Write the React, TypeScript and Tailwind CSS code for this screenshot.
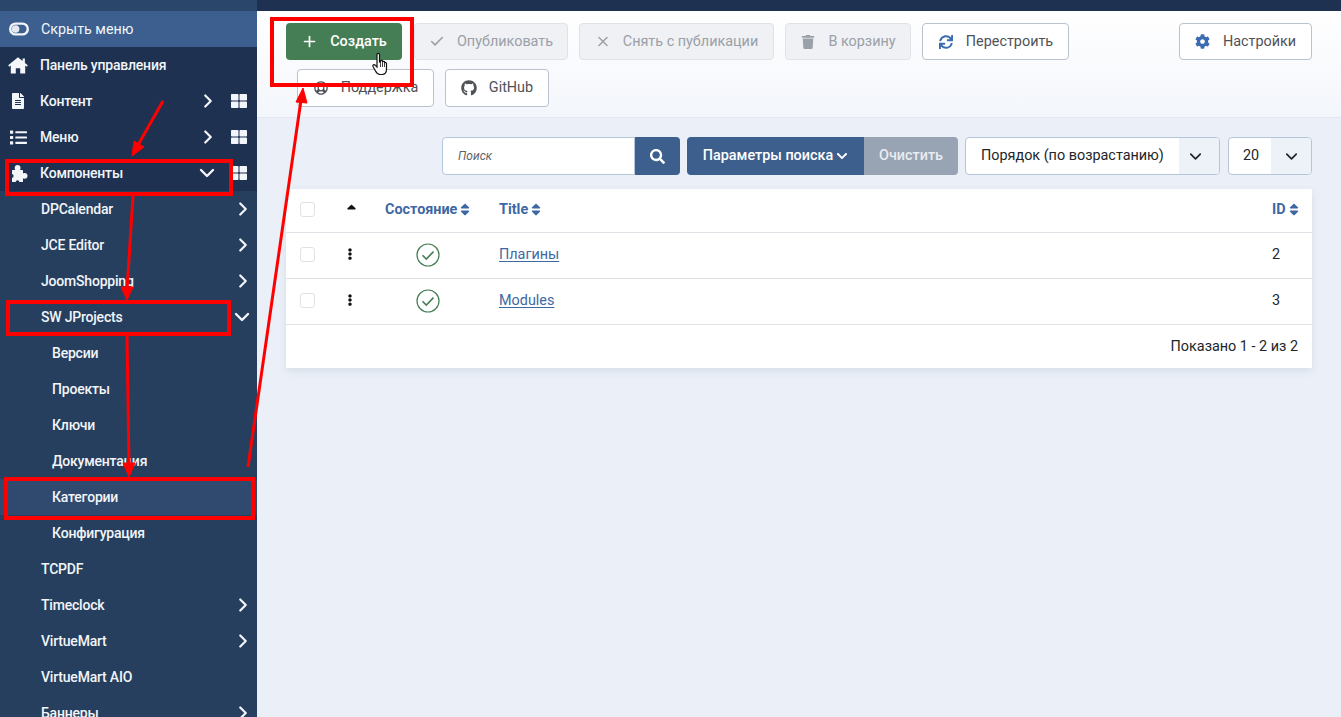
import React from "react";
import {
  FaFileAlt, FaList, FaThLarge, FaTrash, FaSync, FaCog,
  FaGithub, FaRegLifeRing, FaSearch, FaSort, FaEllipsisV, FaSortUp, FaChevronDown,
} from "react-icons/fa";
import { FiCheck, FiChevronDown, FiChevronRight, FiPlus, FiX } from "react-icons/fi";

const Toggle = () => (
  <svg width="20" height="14" viewBox="0 0 20 14" className="shrink-0">
    <rect x="1.2" y="1.6" width="17.6" height="10.8" rx="5.4" fill="none" stroke="#f2f5f9" strokeWidth="2.4" />
    <circle cx="6.6" cy="7" r="3.8" fill="#e4e9f0" />
  </svg>
);

const HomeIcon = () => (
  <svg width="20" height="17" viewBox="0 0 20 17" fill="#f4f6f9">
    <path d="M10 0.2 L14.6 4 V1.4 H16.9 V5.9 L19.8 8.3 L18.7 9.8 L17.2 8.6 V16.4 H12.2 V11.2 H7.8 V16.4 H2.8 V8.6 L1.3 9.8 L0.2 8.3 Z" />
  </svg>
);

const PuzzleIcon = () => (
  <svg width="18" height="17" viewBox="0 0 18 17" fill="#f4f6f9" className="ml-[1px]">
    <rect x="2" y="5" width="11" height="12" rx="0.5" />
    <circle cx="7.6" cy="3" r="2.9" />
    <circle cx="14.6" cy="10.8" r="2.9" />
    <circle cx="1.6" cy="11" r="2" fill="#1f3150" />
    <circle cx="7.5" cy="17" r="1.8" fill="#1f3150" />
  </svg>
);

type Row = { t: string; icon?: React.ReactNode; chev?: "r" | "d"; dash?: boolean; lvl: 1 | 2 | 3; active?: boolean };

const rows: Row[] = [
  { t: "Панель управления", icon: <HomeIcon />, lvl: 1 },
  { t: "Контент", icon: <FaFileAlt size={16} />, lvl: 1, chev: "r", dash: true },
  { t: "Меню", icon: <FaList size={17} />, lvl: 1, chev: "r", dash: true },
  { t: "Компоненты", icon: <PuzzleIcon />, lvl: 1, chev: "d", dash: true },
  { t: "DPCalendar", lvl: 2, chev: "r" },
  { t: "JCE Editor", lvl: 2, chev: "r" },
  { t: "JoomShopping", lvl: 2, chev: "r" },
  { t: "SW JProjects", lvl: 2, chev: "d" },
  { t: "Версии", lvl: 3 },
  { t: "Проекты", lvl: 3 },
  { t: "Ключи", lvl: 3 },
  { t: "Документация", lvl: 3 },
  { t: "Категории", lvl: 3, active: true },
  { t: "Конфигурация", lvl: 3 },
  { t: "TCPDF", lvl: 2 },
  { t: "Timeclock", lvl: 2, chev: "r" },
  { t: "VirtueMart", lvl: 2, chev: "r" },
  { t: "VirtueMart AIO", lvl: 2 },
  { t: "Баннеры", lvl: 2, chev: "r" },
];

function SideRow({ r }: { r: Row }) {
  if (r.lvl === 1) {
    return (
      <div className="flex h-[36px] shrink-0 items-center bg-[#1f3150] pl-[8px] pr-[10px]">
        <span className="flex w-[20px] justify-center">{r.icon}</span>
        <span className="ml-[12px] flex-1">{r.t}</span>
        {r.chev === "r" && <FiChevronRight size={22} strokeWidth={2.4} className="mr-[12px]" />}
        {r.chev === "d" && <FiChevronDown size={24} strokeWidth={2.4} className="mr-[12px]" />}
        {r.dash && <FaThLarge size={16} />}
      </div>
    );
  }
  return (
    <div
      className={
        r.lvl === 2
          ? "flex h-[36px] shrink-0 items-center bg-[#263f5e] pl-[41px] pr-[3px]"
          : r.active
            ? "flex h-[36px] shrink-0 items-center bg-[#30496f] pl-[52px] pr-[3px]"
            : "flex h-[36px] shrink-0 items-center bg-[#263f5e] pl-[52px] pr-[3px]"
      }
    >
      <span className="flex-1">{r.t}</span>
      {r.chev === "r" && <FiChevronRight size={22} strokeWidth={2.4} />}
      {r.chev === "d" && <FiChevronDown size={24} strokeWidth={2.4} />}
    </div>
  );
}

function TBtn({ icon, label, w, off, cls }: { icon: React.ReactNode; label: string; w: string; off?: boolean; cls?: string }) {
  return (
    <div
      className={`flex h-[37px] items-center justify-center rounded-[4px] border text-[14.4px] ${w} ${
        off ? "border-[#dfe3e8] bg-[#eff1f4] text-[#9aa0a7]" : "border-[#b9c2cd] bg-white text-[#4f5257]"
      } ${cls ?? ""}`}
    >
      <span className="mr-[12px] flex w-[16px] justify-center">{icon}</span>
      {label}
    </div>
  );
}

function StatusIcon() {
  return (
    <svg width="24" height="24" viewBox="0 0 24 24">
      <circle cx="12" cy="12" r="11" fill="none" stroke="#457d54" strokeWidth="1.2" />
      <path d="M6.5 12.3 L10.3 16 L17.5 8.6" fill="none" stroke="#457d54" strokeWidth="1.6" />
    </svg>
  );
}

function Head({ t }: { t: string }) {
  return (
    <span className="inline-flex items-center text-[14.4px] font-bold text-[#3e68a3]">
      {t}
      <FaSort className="ml-[3px] h-[15px] w-[10px]" />
    </span>
  );
}

function TableRow({ title, id }: { title: string; id: string }) {
  return (
    <div className="flex h-[46px] items-center border-t border-[#dfe2e6] pb-[2px]">
      <div className="w-[45px] pl-[14px]">
        <div className="h-[15px] w-[15px] rounded-[3px] border border-[#dfe2e6] bg-white" />
      </div>
      <div className="mb-[2px] flex w-[38px] justify-center">
        <FaEllipsisV size={12} className="text-[#111]" />
      </div>
      <div className="ml-[2px] flex w-[114px] justify-center">
        <StatusIcon />
      </div>
      <div className="flex-1 pl-[14px] text-[14.4px] text-[#3e68a3] underline underline-offset-2">{title}</div>
      <div className="w-[40px] text-[14.4px] text-[#22262a]">{id}</div>
    </div>
  );
}

function Annotations() {
  const rect = "pointer-events-none absolute border-[4px] border-[#ff0000]";
  return (
    <>
      <div className={`${rect} left-[5px] top-[159px] h-[37px] w-[228px]`} />
      <div className={`${rect} left-[6px] top-[300px] h-[36px] w-[225px]`} />
      <div className={`${rect} left-[4px] top-[477px] h-[43px] w-[251px]`} />
      <div className={`${rect} left-[270px] top-[17px] h-[70px] w-[144px]`} />
      <svg width="1341" height="717" className="pointer-events-none absolute left-0 top-0">
        <g stroke="#ff0000" strokeWidth="3" fill="#ff0000">
          <line x1="163" y1="101" x2="138" y2="145" />
          <polygon points="132,156 134,141 144,147" strokeWidth="1" />
          <line x1="133" y1="196" x2="127" y2="290" />
          <polygon points="127,300 121,287 133,287" strokeWidth="1" />
          <line x1="127" y1="335" x2="129" y2="466" />
          <polygon points="129,477 123,463 135,463" strokeWidth="1" />
          <line x1="248" y1="467" x2="301" y2="100" />
          <polygon points="303,88 307,103 296,102" strokeWidth="1" />
        </g>
      </svg>
      <div className="pointer-events-none absolute left-[371px] top-[52px]">
        <svg width="20" height="24" viewBox="0 0 20 24">
          <path
            d="M6 2.5 C6 1 8.5 1 8.5 2.5 V10 L9.5 9.5 V9 C9.5 8 11.5 8 11.5 9 V10 C11.5 9 13.5 9 13.5 10 V11 C13.5 10 15.5 10.4 15.5 11.5 V17 C15.5 20 14 22.5 11 22.5 H9 C6.5 22.5 5.5 21 4.5 19 L2 14.5 C1.3 13 3.3 12 4.3 13.3 L6 15 Z"
            fill="#fff"
            stroke="#111"
            strokeWidth="1.2"
          />
          <path d="M9.5 10 V15 M11.5 10 V15 M13.5 11 V15" stroke="#111" strokeWidth="0.8" />
        </svg>
      </div>
    </>
  );
}

export default function App() {
  return (
    <div className="relative flex h-[717px] w-[1341px] overflow-hidden bg-[#ebf0f8] font-['Roboto',sans-serif]">
      <aside className="flex w-[257px] shrink-0 flex-col overflow-hidden bg-[#263f5e] text-[14px] font-medium tracking-[-0.2px] text-[#f2f5f9]">
        <div className="h-[11px] shrink-0 bg-[#2b466b]" />
        <div className="flex h-[36px] shrink-0 items-center bg-[#3c5f8f] pl-[9px]">
          <Toggle />
          <span className="ml-[12px] pt-[1px] text-[14.3px] font-normal tracking-normal">Скрыть меню</span>
        </div>
        {rows.map((r) => (
          <SideRow key={r.t} r={r} />
        ))}
      </aside>
      <main className="flex min-w-0 flex-1 flex-col">
        <div className="h-[11px] shrink-0 bg-[#1f3150]" />
        <div className="h-[107px] shrink-0 border-b border-[#e3e8ef] bg-gradient-to-b from-white to-[#f3f6fb] pl-[29px] pr-[29px] pt-[12px]">
          <div className="flex gap-[11px]">
            <div className="flex h-[37px] w-[116px] items-center justify-center rounded-[4px] bg-[#457d54] text-[14.4px] font-medium text-white">
              <FiPlus size={17} strokeWidth={2.4} className="mr-[12px]" />
              Создать
            </div>
            <TBtn off icon={<FiCheck size={17} strokeWidth={2.4} />} label="Опубликовать" w="w-[154px] ml-[1px]" />
            <TBtn off icon={<FiX size={17} strokeWidth={2.2} />} label="Снять с публикации" w="w-[195px]" />
            <TBtn off icon={<FaTrash size={14} />} label="В корзину" w="w-[126px]" />
            <TBtn icon={<FaSync size={14} className="text-[#3a6cb0]" />} label="Перестроить" w="w-[147px]" />
            <TBtn icon={<FaCog size={15} className="text-[#3a6cb0]" />} label="Настройки" w="w-[133px]" cls="ml-auto" />
          </div>
          <div className="ml-[11px] mt-[9px] flex gap-[11px]">
            <TBtn icon={<FaRegLifeRing size={14} className="text-[#4f5257]" />} label="Поддержка" w="w-[137px]" cls="h-[38px] pb-[1px]" />
            <TBtn icon={<FaGithub size={16} className="text-[#4f5257]" />} label="GitHub" w="w-[104px]" cls="h-[38px] pb-[1px]" />
          </div>
        </div>
        <div className="flex-1 px-[29px] pt-[19px]">
          <div className="flex h-[38px] justify-end text-[14.4px]">
            <div className="flex w-[193px] items-center rounded-l-[4px] border border-[#b7c5da] bg-white pl-[15px] text-[12px] italic text-[#5f6469]">
              Поиск
            </div>
            <div className="flex w-[45px] items-center justify-center rounded-r-[4px] bg-[#3d5f8d] text-white">
              <FaSearch size={15} />
            </div>
            <div className="ml-[7px] flex w-[177px] items-center justify-center rounded-l-[4px] bg-[#3d5f8d] font-medium text-white">
              Параметры поиска
              <FaChevronDown size={12} className="ml-[3px]" />
            </div>
            <div className="flex w-[94px] items-center justify-center rounded-r-[4px] bg-[#98a4b3] font-medium text-[#e9ecf0]">
              Очистить
            </div>
            <div className="ml-[7px] flex w-[255px] items-center overflow-hidden rounded-[4px] border border-[#b7c5da] bg-white text-[#22262a]">
              <span className="flex-1 pl-[15px]">Порядок (по возрастанию)</span>
              <span className="flex h-full w-[32px] items-center justify-center bg-[#edf1f8]">
                <FiChevronDown size={19} strokeWidth={2.2} className="text-[#22262a]" />
              </span>
              <span className="h-full w-[8px] bg-[#edf1f8]" />
            </div>
            <div className="ml-[8px] flex w-[84px] items-center overflow-hidden rounded-[4px] border border-[#b7c5da] bg-white text-[#22262a]">
              <span className="flex-1 pl-[14px]">20</span>
              <span className="flex h-full w-[40px] items-center justify-center bg-[#edf1f8]">
                <FiChevronDown size={19} strokeWidth={2.2} className="text-[#22262a]" />
              </span>
            </div>
          </div>
          <div className="mt-[14px] bg-white shadow-[0_3px_8px_rgba(40,60,90,0.10)]">
            <div className="flex h-[43px] items-center pb-[4px]">
              <div className="w-[45px] pl-[14px]">
                <div className="mt-[2px] h-[15px] w-[15px] rounded-[3px] border border-[#dfe2e6] bg-white" />
              </div>
              <div className="flex w-[40px] justify-center">
                <FaSortUp size={15} className="mt-[3px] text-[#111]" />
              </div>
              <div className="w-[114px] pl-[14px]">
                <Head t="Состояние" />
              </div>
              <div className="flex-1 pl-[14px]">
                <Head t="Title" />
              </div>
              <div className="w-[40px]">
                <Head t="ID" />
              </div>
            </div>
            <TableRow title="Плагины" id="2" />
            <TableRow title="Modules" id="3" />
            <div className="flex h-[44px] items-center justify-end border-t border-[#dfe2e6] pr-[14px] text-[14.4px] text-[#22262a]">
              Показано 1 - 2 из 2
            </div>
          </div>
        </div>
      </main>
      <Annotations />
    </div>
  );
}
